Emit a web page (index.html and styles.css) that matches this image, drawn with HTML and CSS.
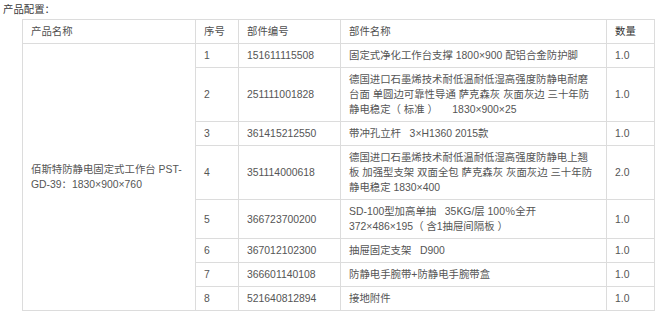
FILE: index.html
```html
<!DOCTYPE html>
<html lang="zh-CN">
<head>
<meta charset="utf-8">
<title>产品配置</title>
<link rel="stylesheet" href="styles.css">
</head>
<body>
<div class="config">
  <div class="config-title">产品配置：</div>
  <table class="config-table">
    <colgroup>
      <col class="c-name">
      <col class="c-no">
      <col class="c-code">
      <col class="c-part">
      <col class="c-qty">
    </colgroup>
    <thead>
      <tr>
        <th>产品名称</th>
        <th>序号</th>
        <th>部件编号</th>
        <th>部件名称</th>
        <th class="qty-head">数量</th>
      </tr>
    </thead>
    <tbody>
      <tr>
        <td rowspan="8">佰斯特防静电固定式工作台 PST-GD-39：1830×900×760</td>
        <td>1</td>
        <td>151611115508</td>
        <td>固定式净化工作台支撑 1800×900 配铝合金防护脚</td>
        <td>1.0</td>
      </tr>
      <tr>
        <td>2</td>
        <td>251111001828</td>
        <td>德国进口石墨烯技术耐低温耐低湿高强度防静电耐磨台面 单圆边可靠性导通 萨克森灰 灰面灰边 三十年防静电稳定（ 标准 ）&nbsp;&nbsp;&nbsp;&nbsp; 1830×900×25</td>
        <td>1.0</td>
      </tr>
      <tr>
        <td>3</td>
        <td>361415212550</td>
        <td>带冲孔立杆&nbsp;&nbsp; 3×H1360 2015款</td>
        <td>1.0</td>
      </tr>
      <tr>
        <td>4</td>
        <td>351114000618</td>
        <td>德国进口石墨烯技术耐低温耐低湿高强度防静电上翘板 加强型支架 双面全包 萨克森灰 灰面灰边 三十年防静电稳定 1830×400</td>
        <td>2.0</td>
      </tr>
      <tr>
        <td>5</td>
        <td>366723700200</td>
        <td>SD-100型加高单抽&nbsp;&nbsp; 35KG/层 100％全开<br>372×486×195（ 含1抽屉间隔板 ）</td>
        <td>1.0</td>
      </tr>
      <tr>
        <td>6</td>
        <td>367012102300</td>
        <td>抽屉固定支架&nbsp;&nbsp; D900</td>
        <td>1.0</td>
      </tr>
      <tr>
        <td>7</td>
        <td>366601140108</td>
        <td>防静电手腕带+防静电手腕带盒</td>
        <td>1.0</td>
      </tr>
      <tr>
        <td>8</td>
        <td>521640812894</td>
        <td>接地附件</td>
        <td>1.0</td>
      </tr>
    </tbody>
  </table>
</div>
</body>
</html>
```

FILE: styles.css
```css
html, body {
  margin: 0;
  padding: 0;
  background: #ffffff;
}

body {
  font-family: "Liberation Sans", "Noto Sans CJK SC", sans-serif;
  font-size: 10.4px;
  color: #555555;
}

.config {
  padding: 2px 3px 0 3px;
}

.config-title {
  line-height: 15px;
  color: #3a3a3a;
}

.config-table {
  margin: 2px 0 0 19px;
  border-collapse: collapse;
  table-layout: fixed;
  width: 633px;
}

.c-name { width: 173px; }
.c-no { width: 43px; }
.c-code { width: 102px; }
.c-part { width: 266px; }
.c-qty { width: 48px; }

.config-table th,
.config-table td {
  border: 1px solid #dcdcdc;
  padding: 4px 8px;
  line-height: 15px;
  text-align: left;
  vertical-align: middle;
  font-weight: normal;
}

.config-table th {
  color: #505050;
}

.config-table th.qty-head {
  color: #333333;
}
```
